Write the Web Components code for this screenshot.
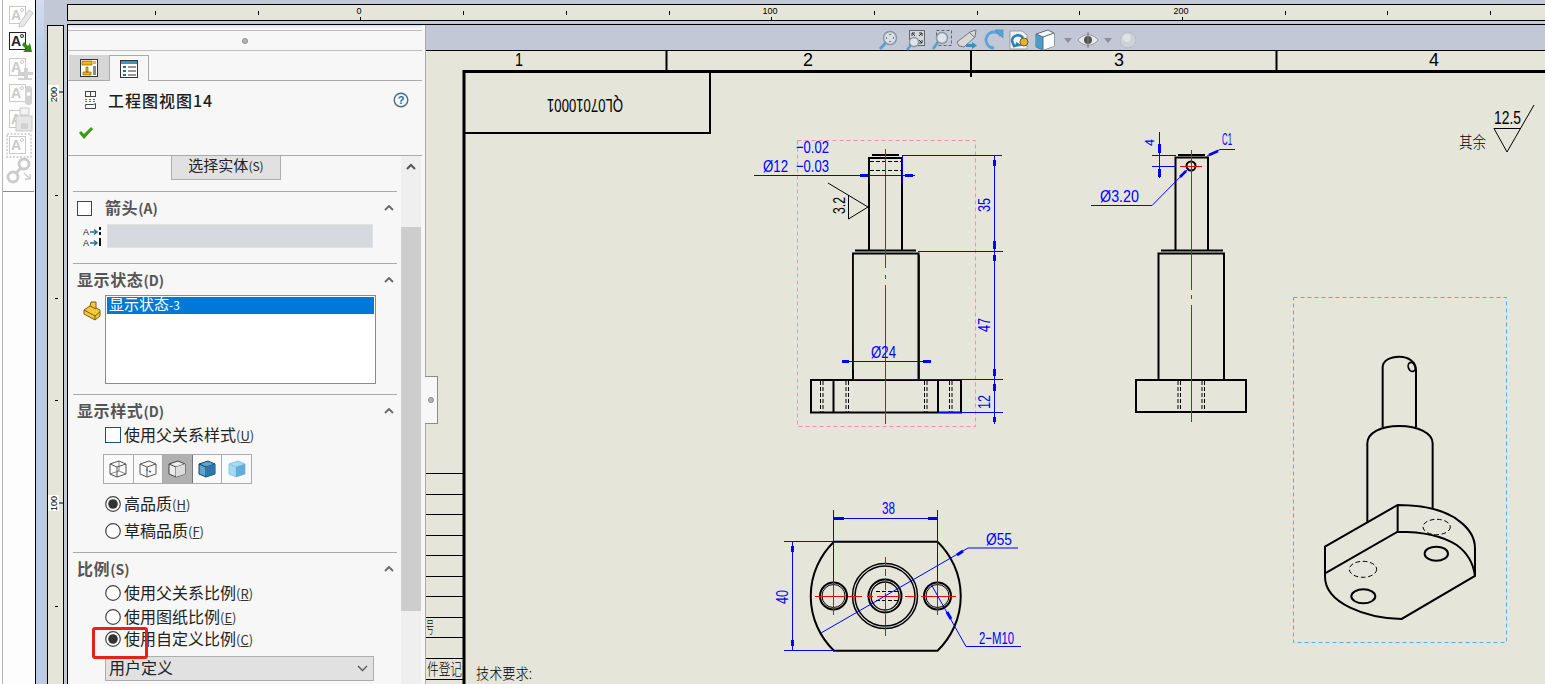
<!DOCTYPE html>
<html>
<head>
<meta charset="utf-8">
<style>
html,body{margin:0;height:684px;overflow:hidden;background:#c3c8d6;}
body{font-family:"Noto Sans CJK SC","Liberation Sans",sans-serif;}
</style>
</head>
<body>
<sw-app>
  <sw-toolbar slot="toolbar"></sw-toolbar>
  <sw-gutter slot="gutter"></sw-gutter>
  <sw-ruler slot="ruler"></sw-ruler>
  <sw-panel slot="panel">
    <sw-section title-text="箭头" key="A" checkbox style="height:71px">
      <div style="display:flex;padding-left:10px;gap:6px;align-items:center">
        <svg width="18" height="21" viewBox="0 0 18 21">
          <g font-family="Liberation Sans" font-size="9" fill="#222"><text x="0" y="9">A</text><text x="0" y="20">A</text></g>
          <g stroke="#2b6f93" stroke-width="1.5" fill="none"><path d="M7 6h7M11 3.500l3 2.500-3 2.500M7 17h7M11 14.500l3 2.500-3 2.500"/></g>
          <g fill="#111"><rect x="16" y="1" width="2" height="3"/><rect x="16" y="6" width="2" height="3"/><rect x="16" y="12" width="2" height="8"/></g>
        </svg>
        <div style="width:266px;height:24px;box-sizing:border-box;background:#d6d9dd;border:1px solid #e2e2e2"></div>
      </div>
    </sw-section>
    <sw-section title-text="显示状态" key="D" style="height:130px">
      <div style="display:flex;padding-left:10px;gap:4px;margin-top:-1px">
        <svg width="18" height="20" viewBox="0 0 18 20" style="margin-top:6px">
          <path d="M1 9 7 5 8 1 13 1 13 7 17 9 17 15 12 19 1 13Z" fill="#f4c93a" stroke="#7a5a10"/>
          <path d="M1 9 12 15 12 19M12 15 17 11M7 5 13 8" fill="none" stroke="#7a5a10"/>
        </svg>
        <div style="width:271px;height:89px;box-sizing:border-box;background:#fff;border:1px solid #8a8a8a;padding:1px">
          <div style="background:#0078d7;color:#fff;font-size:15px;line-height:14px;height:17px;padding-left:2px;white-space:nowrap">显示状态<span style="font-size:12px">-3</span></div>
        </div>
      </div>
    </sw-section>
    <sw-section title-text="显示样式" key="D" style="height:157px">
      <div style="display:flex;flex-direction:column;padding-left:32px">
        <sw-option type="check" label="使用父关系样式" key="U" style="margin-top:-2px"></sw-option>
        <sw-style-buttons style="margin:9px 0 0 -2px"></sw-style-buttons>
        <sw-option label="高品质" key="H" checked style="margin-top:10px"></sw-option>
        <sw-option label="草稿品质" key="F" style="margin-top:7px"></sw-option>
      </div>
    </sw-section>
    <sw-section title-text="比例" key="S" style="height:140px">
      <div style="display:flex;flex-direction:column;padding-left:32px">
        <sw-option label="使用父关系比例" key="R" style="margin-top:-2px"></sw-option>
        <sw-option label="使用图纸比例" key="E" style="margin-top:4px"></sw-option>
        <sw-option label="使用自定义比例" key="C" checked style="margin-top:2px"></sw-option>
        <sw-select label="用户定义" style="margin-top:7px"></sw-select>
      </div>
    </sw-section>
  </sw-panel>
  <sw-viewbar slot="viewbar"></sw-viewbar>
  <sw-sheet slot="sheet"></sw-sheet>
</sw-app>

<script>
class SwApp extends HTMLElement {
  constructor() {
    super()
    this.attachShadow({mode:'open'})
    this.shadowRoot.innerHTML = `
<style>
:host{display:grid;grid-template-columns:36px 31px 1fr;grid-template-rows:25px 659px;width:1545px;height:684px;overflow:hidden;background:#c3c8d6;}
.tb{grid-column:1;grid-row:1/3;display:flex;}
.gu{grid-column:2;grid-row:1/3;display:flex;}
.ru{grid-column:3;grid-row:1;display:flex;}
.ma{grid-column:3;grid-row:2;display:flex;min-width:0;}
.dr{flex:1;display:flex;flex-direction:column;min-width:0;position:relative;}
</style>
<div class="tb"><slot name="toolbar"></slot></div>
<div class="gu"><slot name="gutter"></slot></div>
<div class="ru"><slot name="ruler"></slot></div>
<div class="ma">
  <slot name="panel"></slot>
  <div class="dr"><slot name="viewbar"></slot><slot name="sheet"></slot></div>
</div>`
  }
}
customElements.define("sw-app",SwApp)

class SwToolbar extends HTMLElement {
  constructor() {
    super()
    this.attachShadow({mode:'open'})
    const glyph = (color,extra) => `
<svg width="30" height="26" viewBox="0 0 30 26">
  <rect x="5.500" y="4.500" width="16" height="17" fill="#fff" stroke="${color}"/>
  <text x="7" y="18" font-family="Liberation Sans" font-weight="bold" font-size="14" fill="${color}">A</text>
  <circle cx="18" cy="8" r="1.500" fill="none" stroke="${color}"/>
  ${extra}
</svg>`
    const gray = "#c9c9c9"
    const icons = [
      glyph(gray,`<path d="M16 21 25 8 29 11 20 24 15 25Z" fill="#e8e8e8" stroke="${gray}"/>`),
      glyph("#222",`<path d="M20 14 24 18 26 15 28 24 19 24 22 21 18 17Z" fill="#2f8a12"/>`),
      glyph(gray,`<path d="M20 14h4v4h5v3h-5v3h-4v-3h-6v-3h6Z" fill="#d2d2d2"/><rect x="14" y="24" width="14" height="2" fill="#d2d2d2"/>`),
      glyph(gray,`<rect x="21" y="6" width="7" height="19" rx="3" fill="#d2d2d2"/><circle cx="24.500" cy="14" r="2" fill="#fff"/>`),
      glyph(gray,`<rect x="12" y="10" width="16" height="15" fill="#e6e6e6" stroke="${gray}"/><rect x="16" y="2" width="9" height="7" fill="#f2f2f2" stroke="${gray}"/><rect x="17" y="17" width="7" height="6" fill="#d2d2d2"/>`),
      glyph(gray,`<path d="M3 2h24v23H3Z" fill="none" stroke="${gray}" stroke-width="1.500" stroke-dasharray="2 1.500"/>`),
      `<svg width="30" height="26" viewBox="0 0 30 26"><g fill="none" stroke="#cbcbcb" stroke-width="2.800"><circle cx="9" cy="19" r="5"/><circle cx="20" cy="6" r="5"/><path d="M12 15 17 10"/></g><path d="M20 15 26 21M26 16v5h-5" fill="none" stroke="#cfcfcf" stroke-width="1.500"/></svg>`
    ]
    this.shadowRoot.innerHTML = `
<style>
:host{display:block;width:36px;height:684px;box-sizing:border-box;background:#fdfdfd;border-right:1px solid #000;}
.in{margin-left:2px;border-left:1px solid #b4b4b4;height:100%;box-sizing:border-box;padding-top:2px;}
.i{height:26px;display:flex;justify-content:center;align-items:center;}
.i svg{display:block;}
hr{border:0;border-top:1px solid #8c8c8c;margin:7px 0 0 0;width:31px;}
</style>
<div class="in">${icons.map(s=>`<div class="i">${s}</div>`).join("")}<hr></div>`
  }
}
customElements.define("sw-toolbar",SwToolbar)

class SwGutter extends HTMLElement {
  constructor() {
    super()
    this.attachShadow({mode:'open'})
    let marks = ""
    for (const y of [194,297,399,605]) marks += `<rect x="7" y="${y-25}" width="3" height="1" fill="#000"/>`
    this.shadowRoot.innerHTML = `
<style>
:host{display:flex;width:31px;height:684px;}
.b{width:8px;background:linear-gradient(#d2dded,#b7cde8 60px);}
.r{width:17px;margin:25px 0 0 3px;box-sizing:border-box;background:#e5e5da;border:1px solid #000;border-bottom:0;}
svg{display:block;}
text{font:9px "Liberation Sans",sans-serif;fill:#000;}
</style>
<div class="b"></div>
<div class="r">
  <svg width="15" height="659" viewBox="0 0 15 659">
    ${marks}
    <rect x="0" y="59" width="11" height="16" fill="#fff"/>
    <rect x="0" y="469" width="11" height="16" fill="#fff"/>
    <path d="M11 477h4M11 66h4" stroke="#000"/>
    <text transform="translate(9,76) rotate(-90)">200</text>
    <text transform="translate(9,485) rotate(-90)">100</text>
  </svg>
</div>`
  }
}
customElements.define("sw-gutter",SwGutter)

class SwRuler extends HTMLElement {
  constructor() {
    super()
    this.attachShadow({mode:'open'})
    let marks = ""
    for (let i=0;i<14;i++) {
      const x = Math.round(155 + i*102.7) - 68
      const major = i%4==2
      marks += `<rect x="${x}" y="${major?12:6}" width="1" height="${major?3:4}" fill="#000"/>`
    }
    this.shadowRoot.innerHTML = `
<style>
:host{display:block;flex:1;height:25px;box-sizing:border-box;padding-top:4px;border-bottom:1px solid #000;}
.r{height:17px;box-sizing:border-box;background:#e5e5da;border:1px solid #000;border-right:0;}
svg{display:block;}
text{font:9px "Liberation Sans",sans-serif;fill:#000;text-anchor:middle;}
</style>
<div class="r">
  <svg width="1477" height="15" viewBox="0 0 1477 15">
    ${marks}
    <text x="291" y="9">0</text><text x="702" y="9">100</text><text x="1113" y="9">200</text>
  </svg>
</div>`
  }
}
customElements.define("sw-ruler",SwRuler)

class SwPanel extends HTMLElement {
  constructor() {
    super()
    this.attachShadow({mode:'open'})
    this.shadowRoot.innerHTML = `
<style>
:host{display:block;position:relative;width:359px;height:659px;box-sizing:border-box;background:#f7f7f7;border-left:1px solid #000;border-right:1px solid #aaa;overflow:hidden;flex:none;}
.st{height:5px;border-bottom:1px solid #bdbdbd;background:linear-gradient(#cfe2f3,#fafafa 3px);margin-right:3px;}
.gr{height:19px;border-bottom:1px solid #bdbdbd;display:flex;justify-content:center;align-items:center;margin-right:3px;}
.gr i{width:6px;height:6px;border-radius:50%;background:#b4b4b4;border:1px solid #8e8e8e;box-sizing:border-box;}
.tabs{display:flex;height:25px;margin:4px 3px 0 0;padding-left:1px;border-bottom:1px solid #aaa;}
.tab{width:40px;display:flex;justify-content:center;align-items:center;background:#d6d6d6;box-sizing:border-box;}
.tab.on{background:#f7f7f7;border:1px solid #aaa;border-bottom:0;height:26px;}
.head{height:75px;box-sizing:border-box;border-bottom:1px solid #aaa;margin-right:3px;position:relative;display:grid;grid-template-columns:40px 1fr 32px;grid-template-rows:38px 36px;}
.ti{display:flex;align-items:center;justify-content:flex-start;padding-left:17px;}
.tt{font-size:16px;font-weight:500;letter-spacing:1px;color:#1c1c1c;align-self:center;white-space:nowrap;line-height:20px;}
.he{display:flex;align-items:center;padding-left:3px;}
.ok{grid-column:1;grid-row:2;padding:7px 0 0 10px;}
.sc{display:flex;height:528px;}
.co{width:333px;flex:none;box-sizing:border-box;padding:0 4px 0 5px;}
.bu{display:block;width:110px;height:24px;margin:0 0 11px 98px;box-sizing:border-box;background:#e1e1e1;border:1px solid #adadad;border-top:0;font-size:15px;line-height:18px;text-align:center;color:#222;white-space:nowrap;}
.bu small{font-size:12px;}
.bar{width:20px;background:#efefef;position:relative;flex:none;}
.th{position:absolute;left:0;top:71px;width:20px;height:384px;background:#cdcdcd;}
.ar{position:absolute;left:5px;top:7px;}
.call{position:absolute;left:24px;top:602px;width:56px;height:32px;box-sizing:border-box;border:3px solid #e8201c;border-radius:3px;}
svg{display:block;}
</style>
<div class="st"></div>
<div class="gr"><i></i></div>
<div class="tabs">
  <div class="tab">
    <svg width="18" height="18" viewBox="0 0 18 18">
      <rect x=".5" y=".5" width="17" height="17" fill="#fff" stroke="#333"/>
      <rect x="2" y="2" width="10" height="4" fill="#f2b705" stroke="#6b5200" stroke-width=".6"/>
      <path d="M3 13h8v3H3ZM6 8h2v5H6Z" fill="#f2b705" stroke="#6b5200" stroke-width=".6"/>
      <rect x="13" y="7" width="3" height="9" fill="#8a8a8a"/>
      <rect x="13" y="2" width="3" height="3" fill="#f2b705"/>
    </svg>
  </div>
  <div class="tab on">
    <svg width="18" height="18" viewBox="0 0 18 18">
      <rect x=".5" y=".5" width="17" height="17" fill="#fff" stroke="#333"/>
      <rect x="1" y="1" width="16" height="3" fill="#3d95c6"/>
      <path d="M3 6h3v2H3ZM3 10h3v2H3ZM3 14h3v2H3Z" fill="#1e6a9a"/>
      <path d="M8 7h8M8 11h8M8 15h8" stroke="#333"/>
    </svg>
  </div>
</div>
<div class="head">
  <div class="ti">
    <svg width="11" height="18" viewBox="0 0 11 18">
      <rect x=".5" y=".5" width="10" height="5" fill="none" stroke="#444"/><path d="M5.500 .5v5" stroke="#444"/>
      <path d="M0 8h2v1H0ZM4 8h2v1H4ZM8 8h2v1H8ZM0 10h2v1H0ZM4 10h2v1H4ZM8 10h2v1H8Z" fill="#2b78ad"/>
      <path d="M.5 13.500h8l2 -1v5h-10.500Z" fill="none" stroke="#444"/>
    </svg>
  </div>
  <div class="tt">工程图视图14</div>
  <div class="he">
    <svg width="16" height="16" viewBox="0 0 16 16">
      <circle cx="8" cy="8" r="6.800" fill="#f2f7fa" stroke="#4f6b80" stroke-width="1.400"/>
      <text x="8" y="12" text-anchor="middle" font-family="Liberation Sans" font-weight="bold" font-size="11" fill="#2a6d9e">?</text>
    </svg>
  </div>
  <div class="ok">
    <svg width="16" height="14" viewBox="0 0 16 14"><path d="M1 7 3 5 6 8 13 1 15 3 6 13Z" fill="#3a9a12"/></svg>
  </div>
</div>
<div class="sc">
  <div class="co">
    <div class="bu">选择实体<small>(S)</small></div>
    <slot></slot>
  </div>
  <div class="bar">
    <div class="th"></div>
    <svg class="ar" width="10" height="7" viewBox="0 0 10 7"><path d="M1 6 5 2 9 6" fill="none" stroke="#555" stroke-width="2"/></svg>
  </div>
</div>
<div class="call"></div>`
  }
}
customElements.define("sw-panel",SwPanel)

class SwSection extends HTMLElement {
  constructor() {
    super()
    this.attachShadow({mode:'open'})
    const box = this.hasAttribute("checkbox") ? `<span class="cb"></span>` : ""
    this.shadowRoot.innerHTML = `
<style>
:host{display:block;box-sizing:content-box;border-top:1px solid #aaa;}
.h{height:32px;display:flex;align-items:center;padding:0 3px 0 4px;font-size:16px;font-weight:700;color:#555;letter-spacing:.6px;white-space:nowrap;}
.cb{width:15px;height:15px;box-sizing:border-box;background:#fff;border:1px solid #444;margin:0 13px 0 0;}
.t{flex:1;margin-top:-3px;}
small{font-size:14px;letter-spacing:0;}
svg{display:block;margin-top:-1px;}
</style>
<div class="h">${box}<span class="t">${this.getAttribute("title-text")}<small>(${this.getAttribute("key")})</small></span>
  <svg width="10" height="7" viewBox="0 0 10 7"><path d="M1 6 5 2 9 6" fill="none" stroke="#666" stroke-width="1.800"/></svg>
</div>
<slot></slot>`
  }
}
customElements.define("sw-section",SwSection)

class SwOption extends HTMLElement {
  constructor() {
    super()
    this.attachShadow({mode:'open'})
    const check = this.getAttribute("type")=="check"
    const mark = check
      ? `<span class="c"></span>`
      : `<svg width="16" height="16" viewBox="0 0 16 16"><circle cx="8" cy="8" r="7.300" fill="#fff" stroke="#444" stroke-width="1.200"/>${this.hasAttribute("checked")?'<circle cx="8" cy="8" r="4.800" fill="#333"/>':''}</svg>`
    this.shadowRoot.innerHTML = `
<style>
:host{display:flex;align-items:center;height:20px;font-size:16px;color:#222;white-space:nowrap;}
.c{width:16px;height:16px;box-sizing:border-box;background:#fff;border:1px solid #1f4e79;}
svg{display:block;}
.l{margin:-2px 0 0 3px;}
small{font-size:13px;color:#333;}
u{text-underline-offset:1px;}
</style>
${mark}<span class="l">${this.getAttribute("label")}<small>(<u>${this.getAttribute("key")}</u>)</small></span>`
  }
}
customElements.define("sw-option",SwOption)

class SwStyleButtons extends HTMLElement {
  constructor() {
    super()
    this.attachShadow({mode:'open'})
    const cube = (fill,side,stroke,extra="") => `<svg width="20" height="20" viewBox="0 0 20 20">
      <path d="M2 5 11 2 18 5 18 15 9 18 2 15Z" fill="${fill}" stroke="${stroke}"/>
      <path d="M2 5 9 8 18 5M9 8V18" fill="none" stroke="${stroke}"/>
      <path d="M9 8 18 5 18 15 9 18Z" fill="${side}"/>${extra}</svg>`
    this.shadowRoot.innerHTML = `
<style>
:host{display:flex;height:30px;width:149px;box-sizing:border-box;border:1px solid #aaa;background:#fafafa;}
div{flex:1;display:flex;align-items:center;justify-content:center;border-right:1px solid #aaa;}
div:last-child{border-right:0;}
.on{background:#b0b0b0;border-color:#777;}
svg{display:block;}
</style>
<div>${cube("none","none","#555",'<path d="M2 15 11 12 18 15M11 2V12" fill="none" stroke="#555" stroke-width=".7"/>')}</div>
<div>${cube("none","none","#555",'<path d="M8 11h2M11 12l2 1" stroke="#2b6f93" stroke-width="1.500"/>')}</div>
<div class="on">${cube("#ececec","#dcdcdc","#444")}</div>
<div>${cube("#5aa6d0","#2c78a8","#17425f")}</div>
<div>${cube("#a5d8f2","#63aed8","#8ec8e8")}</div>`
  }
}
customElements.define("sw-style-buttons",SwStyleButtons)

class SwSelect extends HTMLElement {
  constructor() {
    super()
    this.attachShadow({mode:'open'})
    this.shadowRoot.innerHTML = `
<style>
:host{display:flex;align-items:center;justify-content:space-between;width:269px;height:25px;box-sizing:border-box;padding:0 5px 0 3px;background:#e1e1e1;border:1px solid #adadad;font-size:16px;color:#222;}
span{margin-top:-3px;}
svg{display:block;}
</style>
<span>${this.getAttribute("label")}</span>
<svg width="11" height="7" viewBox="0 0 11 7"><path d="M1 1 5.500 5.500 10 1" fill="none" stroke="#555" stroke-width="1.300"/></svg>`
  }
}
customElements.define("sw-select",SwSelect)

class SwViewbar extends HTMLElement {
  constructor() {
    super()
    this.attachShadow({mode:'open'})
    const lens = (inner) => `<svg width="22" height="22" viewBox="0 0 22 22">
      <circle cx="13" cy="9" r="6.500" fill="#d9dfe6" stroke="#8b97a3" stroke-width="1.500"/>${inner}
      <path d="M9 13.500 3 20" stroke="#5d9fcb" stroke-width="2.800"/></svg>`
    const items = [
      lens(`<path d="M13 5v1M13 12v1M9 9h1M16 9h1" stroke="#555" stroke-width="1.500"/>`),
      `<svg width="22" height="22" viewBox="0 0 22 22"><rect x="4.500" y="1.500" width="15" height="15" fill="#d4d7dc" stroke="#666"/><path d="M7 4l3 3M17 4l-3 3M17 14l-3-3M7 4h3M7 4v3M17 4h-3M17 4v3M17 14h-3M17 14v-3" stroke="#333"/><circle cx="9" cy="13" r="4.500" fill="#dfe5ea" stroke="#8b97a3" stroke-width="1.400"/><path d="M6 16 2 21" stroke="#5d9fcb" stroke-width="2.500"/></svg>`,
      `<svg width="22" height="22" viewBox="0 0 22 22"><rect x="5.500" y="1.500" width="15" height="15" fill="none" stroke="#666" stroke-dasharray="3 2"/><circle cx="11" cy="9" r="5.500" fill="#dfe5ea" stroke="#8b97a3" stroke-width="1.500"/><path d="M7 13 2 20" stroke="#5d9fcb" stroke-width="2.800"/></svg>`,
      `<svg width="22" height="22" viewBox="0 0 22 22"><path d="M1 13 14 3 20 1 19 8 8 18 3 17Z" fill="#d8d8d8" stroke="#777"/><path d="M13 3 18 8" stroke="#777"/><path d="M10 15h6v-2l5 3.500-5 3.500v-2h-6Z" fill="#3b8cc0"/></svg>`,
      `<svg width="22" height="22" viewBox="0 0 22 22"><path d="M19 7A8 8 0 1 0 12 19" fill="none" stroke="#5aa5d5" stroke-width="2.800"/><path d="M13 1h8v8Z" fill="#5aa5d5" stroke="#2f7fb5" stroke-width=".6"/></svg>`,
      `<svg width="22" height="22" viewBox="0 0 22 22"><path d="M2 2h12l5 4v14H2Z" fill="#f4f4f4" stroke="#999"/><path d="M15 9A6 6 0 0 0 4 12l2 5 5-1-3-2" fill="none" stroke="#2f7fb5" stroke-width="2.500"/><circle cx="16" cy="13" r="4" fill="#e2b23a" stroke="#7a5a10"/></svg>`,
      `<svg width="22" height="22" viewBox="0 0 22 22"><path d="M2 5 14 1 20 4 20 17 9 21 2 18Z" fill="#f3f5f6" stroke="#5a6a76"/><path d="M2 5 9 8V21L2 18Z" fill="#4b9bcb"/><path d="M9 8 20 4V17L9 21Z" fill="#fff"/><path d="M2 5 9 8 20 4M9 8V21" fill="none" stroke="#5a6a76"/></svg>`,
      `<svg width="8" height="5" viewBox="0 0 8 5"><path d="M0 0h8L4 5Z" fill="#8a8f9a"/></svg>`,
      `<svg width="22" height="16" viewBox="0 0 22 16"><path d="M1 8C6 1 16 1 21 8 16 15 6 15 1 8Z" fill="#e6e8ea" stroke="#9a9a9a"/><circle cx="11" cy="8" r="4" fill="#555"/><path d="M11 0V16" stroke="#777"/></svg>`,
      `<svg width="8" height="5" viewBox="0 0 8 5"><path d="M0 0h8L4 5Z" fill="#8a8f9a"/></svg>`,
      `<svg width="18" height="18" viewBox="0 0 18 18"><circle cx="9" cy="9" r="8" fill="#cdd1d8" stroke="#b6bac2"/><circle cx="8" cy="7" r="4" fill="#dfe2e6"/></svg>`
    ]
    const widths = [26,29,24,26,26,26,26,19,21,19,21]
    this.shadowRoot.innerHTML = `
<style>
:host{display:grid;grid-template-columns:${widths.join("px ")}px;justify-content:start;align-items:center;justify-items:center;height:26px;box-sizing:border-box;padding:4px 0 0 449px;background:#c3c8d6;border-bottom:1px solid #000;}
svg{display:block;}
</style>
${items.join("")}`
  }
}
customElements.define("sw-viewbar",SwViewbar)

class SwSheet extends HTMLElement {
  constructor() {
    super()
    this.attachShadow({mode:'open'})
    const arrowsV = (x,ys) => ys.map(([a,b])=>`<path d="M${x} ${a}V${b}" stroke="#00f" stroke-width="3"/>`).join("")
    const arrowsH = (y,xs) => xs.map(([a,b])=>`<path d="M${a} ${y}H${b}" stroke="#00f" stroke-width="3"/>`).join("")
    const table = [473,494,514,535,555,576,596,617,637,658,679].map(y=>`M426 ${y}.5H463`).join("")
    this.shadowRoot.innerHTML = `
<style>
:host{display:block;flex:1;position:relative;background:#e5e5da;min-height:0;}
svg.s{display:block;}
.k{fill:none;stroke:#000;stroke-width:2;}
.t{fill:none;stroke:#000;stroke-width:1;}
.b{fill:none;stroke:#00f;stroke-width:1;}
.r{fill:none;stroke:#f00000;stroke-width:1;}
.h{fill:none;stroke:#000;stroke-width:1;stroke-dasharray:4 2;}
.f{fill:none;stroke:#000;stroke-width:3;}
text{font-family:"Liberation Sans","Noto Sans CJK SC",sans-serif;font-size:18px;fill:#000;}
.dt{fill:#00f;font-size:17px;}
.cn{font-family:"Noto Sans CJK SC",sans-serif;font-size:16px;font-weight:300;}
.tab{position:absolute;left:-1px;top:325px;width:13px;height:48px;box-sizing:border-box;background:#f7f7f7;border:1px solid #8c8c8c;border-left:0;display:flex;align-items:center;justify-content:center;}
.tab i{width:6px;height:6px;border-radius:50%;background:#b4b4b4;border:1px solid #8e8e8e;box-sizing:border-box;}
</style>
<svg class="s" width="1119" height="633" viewBox="426 51 1119 633">
  <!-- border and zones -->
  <path class="f" d="M464 684V71.500H1545"/>
  <path d="M666.500 51V71M971 51V77M1276.500 51V71" stroke="#000" stroke-width="2" fill="none"/>
  <text x="519" y="66" text-anchor="middle" textLength="8" lengthAdjust="spacingAndGlyphs">1</text>
  <text x="808" y="66" text-anchor="middle" textLength="10" lengthAdjust="spacingAndGlyphs">2</text>
  <text x="1119" y="66" text-anchor="middle" textLength="10" lengthAdjust="spacingAndGlyphs">3</text>
  <text x="1434" y="66" text-anchor="middle" textLength="10" lengthAdjust="spacingAndGlyphs">4</text>
  <path class="k" d="M710 71V133H464"/>
  <text transform="rotate(180 585 106)" x="547" y="113" textLength="76" lengthAdjust="spacingAndGlyphs">QL07010001</text>

  <!-- title block stub -->
  <path class="t" d="${table}"/>
  <text class="cn" x="426" y="633" textLength="8" lengthAdjust="spacingAndGlyphs">号</text>
  <text class="cn" x="427" y="675" textLength="35" lengthAdjust="spacingAndGlyphs">件登记</text>
  <text class="cn" x="476" y="679" style="font-size:15px" textLength="56" lengthAdjust="spacingAndGlyphs">技术要求:</text>

  <!-- front view -->
  <rect x="797.500" y="140.500" width="178" height="286" fill="none" stroke="#f78ab8" stroke-dasharray="4 3"/>
  <path class="k" d="M872 155H899M869 183V158H902V251M869 183V251M855 250.500H916M853 379V253.500H918.500V379"/>
  <path class="h" d="M870 161.500H901M870 170.500H901"/>
  <rect class="k" x="811" y="380" width="150" height="32.500"/>
  <path class="k" d="M833.500 380V412M938 380V412"/>
  <path class="h" d="M820.500 381V412M823 381V412M846 381V412M848.500 381V412M924.500 381V412M927 381V412M949.500 381V412M952 381V412"/>
  <path class="r" d="M885.500 149V268M885.500 275V279M885.500 285V424"/>
  <path class="b" d="M902 155.500H1002M918 251.500H1003M853 379.500H1003M938 412.500H1003M994.500 155V424M754 175.500H915M842 361.500H931"/>
  <path d="M869.500 170V183M902.500 155V183M853.500 255V370M919.500 255V379M938 412.500H961" stroke="#00f" fill="none"/>
  ${arrowsV(994.500,[[160,166],[241,249],[255,261],[369,376],[384,391],[417,422]])}
  ${arrowsH(175.500,[[860,868],[905,913]])}
  ${arrowsH(361.500,[[842,849],[923,931]])}
  <text class="dt" x="763" y="172" textLength="25" lengthAdjust="spacingAndGlyphs">Ø12</text>
  <text class="dt" x="796" y="153" textLength="33" lengthAdjust="spacingAndGlyphs">−0.02</text>
  <text class="dt" x="796" y="172" textLength="33" lengthAdjust="spacingAndGlyphs">−0.03</text>
  <text class="dt" x="871" y="358" textLength="25" lengthAdjust="spacingAndGlyphs">Ø24</text>
  <text class="dt" transform="translate(990,212) rotate(-90)" textLength="14" lengthAdjust="spacingAndGlyphs">35</text>
  <text class="dt" transform="translate(990,332) rotate(-90)" textLength="14" lengthAdjust="spacingAndGlyphs">47</text>
  <text class="dt" transform="translate(990,409) rotate(-90)" textLength="14" lengthAdjust="spacingAndGlyphs">12</text>
  <path class="t" d="M828 183 868 207 848.500 219V195"/>
  <text transform="translate(845,214) rotate(-90)" textLength="17" lengthAdjust="spacingAndGlyphs" style="font-size:17px">3.2</text>

  <!-- side view -->
  <path class="k" d="M1178 155H1205M1175.500 251V157.500H1208V251M1161 250.500H1223M1158.500 380V253.500H1224V380"/>
  <rect class="k" x="1136" y="380" width="110" height="32"/>
  <path class="h" d="M1178 381V412M1180.500 381V412M1202 381V412M1204.500 381V412"/>
  <circle class="k" cx="1191" cy="166" r="4.500"/>
  <path class="r" d="M1191.500 150V290M1191.500 295V299M1191.500 305V422M1180 166.500H1202"/>
  <path class="b" d="M1159.500 132V178M1152 155.500H1176M1152 166.500H1176M1091 205.500H1152L1189 168M1207 156 1220 149.500H1235"/>
  ${arrowsV(1159.500,[[144,153],[169,177]])}
  <path d="M1180 177 1186 171M1209 155 1218 151" stroke="#00f" stroke-width="2.500"/>
  <text class="dt" transform="translate(1154,146) rotate(-90)" textLength="7" lengthAdjust="spacingAndGlyphs" style="font-size:13px">4</text>
  <text class="dt" x="1222" y="145" textLength="10" lengthAdjust="spacingAndGlyphs">C1</text>
  <text class="dt" x="1100" y="202" textLength="39" lengthAdjust="spacingAndGlyphs">Ø3.20</text>

  <!-- roughness -->
  <path class="t" d="M1494 128.500H1521M1494 128.500 1507 152 1534 105"/>
  <text x="1494" y="124" textLength="27" lengthAdjust="spacingAndGlyphs">12.5</text>
  <text class="cn" x="1459" y="148" textLength="27" lengthAdjust="spacingAndGlyphs">其余</text>

  <!-- bottom view -->
  <path class="k" d="M834 541.700H937.500A75.500 75.500 0 0 1 937.500 650.700H834A75.500 75.500 0 0 1 834 541.700Z"/>
  <g fill="none" stroke="#000">
    <circle cx="885" cy="596" r="32.500" stroke-width="1.500"/><circle cx="885" cy="596" r="30" stroke-width="1.500"/>
    <circle cx="885" cy="596" r="16.500" stroke-width="2"/><circle cx="885" cy="596" r="14" stroke-width="1.300"/>
    <circle cx="833.500" cy="596" r="13.500" stroke-width="2"/><circle cx="833.500" cy="596" r="11.500"/>
    <circle cx="937.500" cy="596" r="13.500" stroke-width="2"/><circle cx="937.500" cy="596" r="11.500"/>
  </g>
  <path class="h" d="M876 591.500H899M876 600.500H899"/>
  <path class="r" d="M815 596.500H845M848 596.500H862M867 596.500H873M877 596.500H900M905 596.500H916M921 596.500H956M885.500 557V566M885.500 569V576M885.500 578V590M885.500 593V612M885.500 614V625M885.500 627V636M833.500 577V615M937.500 577V615"/>
  <path class="b" d="M833.500 510V582M937.500 510V582M833 518.500H938M784 541.500H834M784 650.500H834M792.500 542V651M821 633 968 548H1018M931 584 966 646.500H1021"/>
  ${arrowsH(518.500,[[834,844],[928,937]])}
  ${arrowsV(792.500,[[546,552],[640,646]])}
  <path d="M957 555 963 551M947 612 951 619" stroke="#00f" stroke-width="3"/>
  <text class="dt" x="882" y="514" textLength="13" lengthAdjust="spacingAndGlyphs">38</text>
  <text class="dt" transform="translate(788,604) rotate(-90)" textLength="14" lengthAdjust="spacingAndGlyphs">40</text>
  <text class="dt" x="986" y="545" textLength="26" lengthAdjust="spacingAndGlyphs">Ø55</text>
  <text class="dt" x="979" y="644" textLength="35" lengthAdjust="spacingAndGlyphs">2−M10</text>

  <!-- iso view -->
  <rect x="1293.500" y="297.500" width="213" height="345" fill="none" stroke="#5aa9f0" stroke-dasharray="4 3"/>
  <g transform="translate(1280,290) scale(.3333)" fill="none" stroke="#000" stroke-width="6">
    <path d="M308 412V232C308 212 330 200 358 200C385 200 408 215 408 240V412"/>
    <ellipse cx="395" cy="231" rx="10" ry="14" transform="rotate(-20 395 231)" stroke-width="5"/>
    <path d="M262 695V460C262 430 300 408 358 408C415 408 458 430 458 460V655"/>
    <path d="M135 770 353 645Q480 645 540 695Q585 730 585 775V858L365 987C260 985 135 940 135 860Z"/>
    <path d="M135 850 353 725Q470 725 530 765Q578 800 585 858M353 645V725"/>
    <ellipse cx="469" cy="791" rx="35" ry="21"/>
    <ellipse cx="250" cy="919" rx="36" ry="21"/>
    <ellipse cx="470" cy="711" rx="41" ry="23" stroke-width="3" stroke-dasharray="14 8"/>
    <ellipse cx="249" cy="838" rx="41" ry="24" stroke-width="3" stroke-dasharray="14 8"/>
  </g>
</svg>
<div class="tab"><i></i></div>`
  }
}
customElements.define("sw-sheet",SwSheet)
</script>
</body>
</html>
